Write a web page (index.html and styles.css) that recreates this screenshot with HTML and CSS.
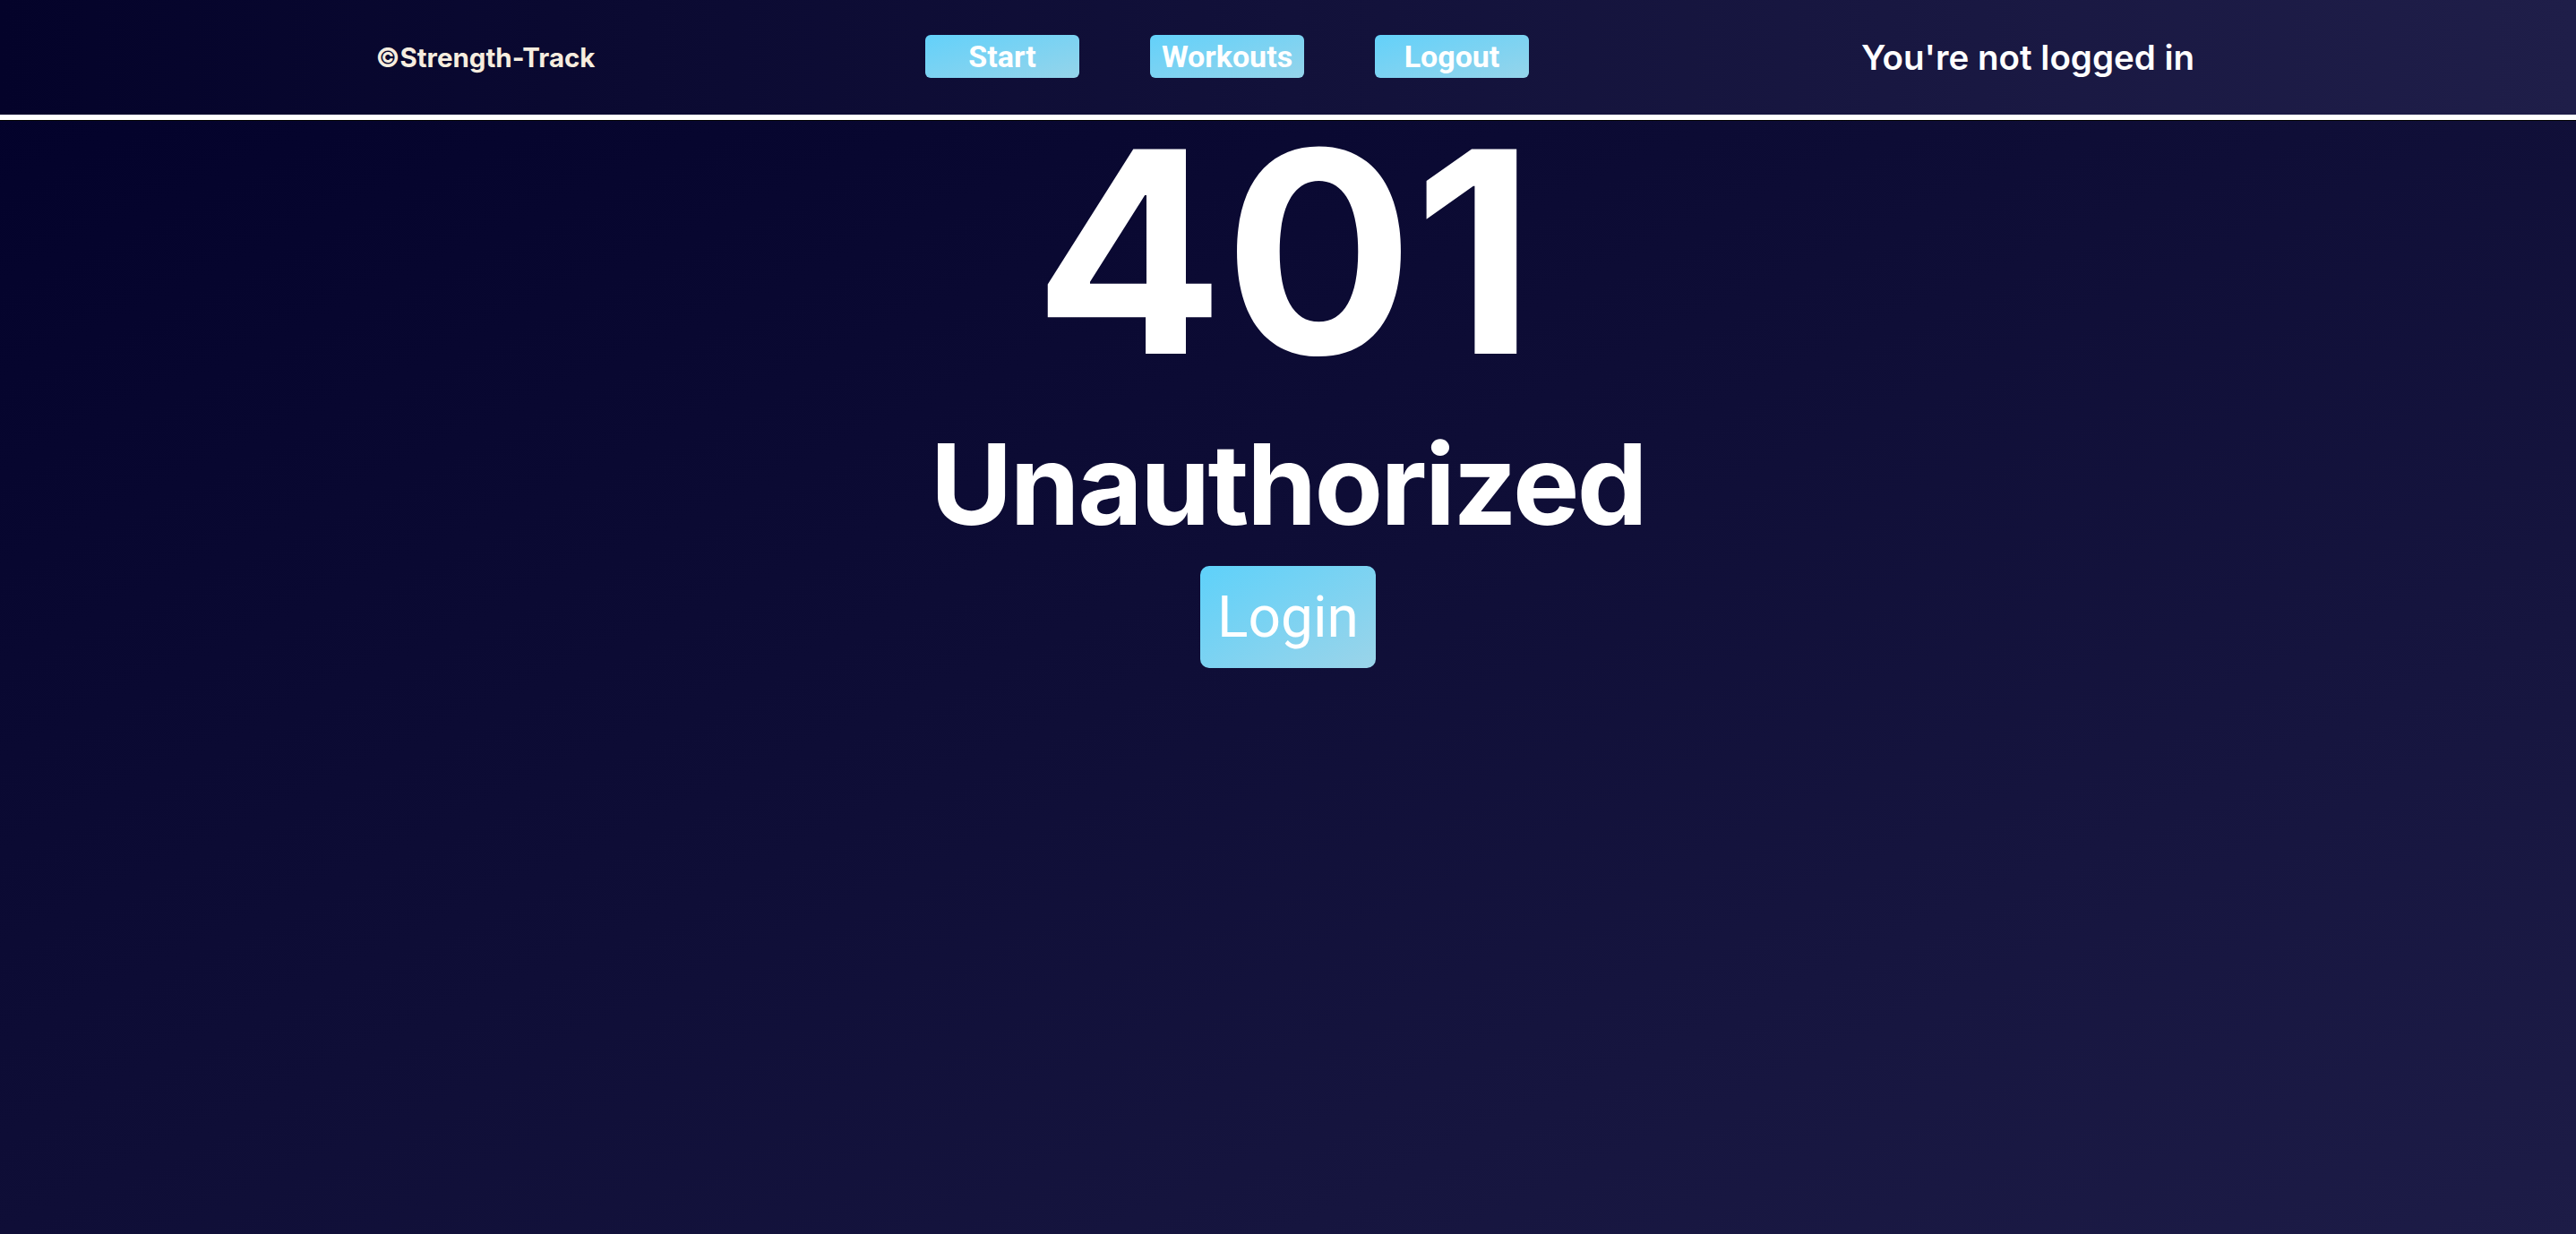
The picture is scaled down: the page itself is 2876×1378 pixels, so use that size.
FILE: index.html
```html
<!DOCTYPE html>
<html lang="en">
<head>
<meta charset="utf-8">
<title>Strength-Track – 401</title>
<link rel="stylesheet" href="styles.css">
</head>
<body>
<div class="page">
  <header class="topbar">
    <div class="brand">©Strength-Track</div>
    <nav class="nav">
      <a class="nav-btn" href="#">Start</a>
      <a class="nav-btn" href="#">Workouts</a>
      <a class="nav-btn" href="#">Logout</a>
    </nav>
    <div class="status">You're not logged in</div>
  </header>
  <main class="error">
    <h1 class="code">401</h1>
    <h2 class="title">Unauthorized</h2>
    <a class="login-btn" href="#">Login</a>
  </main>
</div>
</body>
</html>
```

FILE: styles.css
```css
html, body {
  margin: 0;
  padding: 0;
}
body {
  font-family: Inter, "Noto Sans", sans-serif;
  color: #fff;
  background: #0c0b33;
}
.page {
  min-height: 100vh;
  background: linear-gradient(to bottom right, #02012a 0%, #0f0e37 50%, #1d1c47 100%);
  display: flex;
  flex-direction: column;
}
.topbar {
  height: 128px;
  box-sizing: content-box;
  border-bottom: 6px solid #fff;
  box-shadow: 0 1px 0 #000;
  background: linear-gradient(to right, #04032a 0%, #12113a 50%, #1f1e49 100%);
  display: grid;
  grid-template-columns: 484px 1172px 616px;
  padding-left: 300px;
  align-items: center;
  justify-items: center;
}
.brand {
  font-size: 29.5px;
  font-weight: 700;
  color: #f6eddf;
}
.nav {
  display: flex;
  gap: 79px;
  margin-bottom: 3px;
}
.nav-btn {
  flex: none;
  width: 172px;
  height: 48px;
  border-radius: 6px;
  background: linear-gradient(to bottom right, #63d1fa, #95d4ea);
  display: flex;
  align-items: center;
  justify-content: center;
  text-decoration: none;
  color: #fff;
  font-family: Roboto, "Liberation Sans", sans-serif;
  font-weight: 700;
  font-size: 34px;
}
.status {
  font-size: 38.5px;
  font-weight: 600;
  color: #fff;
}
.error {
  display: flex;
  flex-direction: column;
  align-items: center;
}
.code {
  margin: 0 8px 0 0;
  font-size: 314px;
  line-height: 294px;
  font-weight: 700;
  letter-spacing: 0;
}
.title {
  margin: 38px 0 0;
  font-size: 125px;
  line-height: 150px;
  font-weight: 700;
  letter-spacing: -2.5px;
}
.login-btn {
  margin-top: 16px;
  width: 196px;
  height: 114px;
  border-radius: 10px;
  background: linear-gradient(to bottom right, #5ed1fa, #9bd4e9);
  display: flex;
  align-items: center;
  justify-content: center;
  color: #fff;
  text-decoration: none;
  font-family: Roboto, "Liberation Sans", sans-serif;
  font-size: 64px;
  font-weight: 400;
}
```
